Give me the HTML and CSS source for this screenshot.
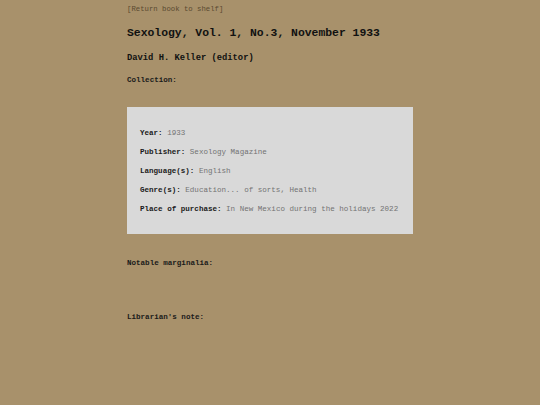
FILE: index.html
```html
<!DOCTYPE html>
<html>
<head>
<meta charset="utf-8">
<link rel="stylesheet" href="styles.css">
</head>
<body>
<div class="page">
  <a class="back" href="#">[Return book to shelf]</a>
  <h1 class="title">Sexology, Vol. 1, No.3, November 1933</h1>
  <h2 class="author">David H. Keller (editor)</h2>
  <div class="label collection">Collection:</div>
  <div class="card">
    <div class="row"><span class="label">Year:</span> <span class="val">1933</span></div>
    <div class="row"><span class="label">Publisher:</span> <span class="val">Sexology Magazine</span></div>
    <div class="row"><span class="label">Language(s):</span> <span class="val">English</span></div>
    <div class="row"><span class="label">Genre(s):</span> <span class="val">Education... of sorts, Health</span></div>
    <div class="row"><span class="label">Place of purchase:</span> <span class="val">In New Mexico during the holidays 2022</span></div>
  </div>
  <div class="label notable">Notable marginalia:</div>
  <div class="label librarian">Librarian's note:</div>
</div>
</body>
</html>
```
FILE: styles.css
```css
html, body {
  margin: 0;
  padding: 0;
  background: #a8916b;
}
body {
  font-family: "Liberation Mono", "Courier New", monospace;
  color: #1a1a1a;
}
.page {
  width: 286px;
  margin: 0 auto;
  padding-top: 4px;
  display: flex;
  flex-direction: column;
  align-items: flex-start;
}
.back {
  font-size: 7.3px;
  line-height: 10px;
  color: #5a4a30;
  text-decoration: none;
}
.title {
  margin: 12px 0 0;
  font-size: 11.4px;
  line-height: 14px;
  font-weight: bold;
  color: #111;
}
.author {
  margin: 12px 0 0;
  font-size: 8.8px;
  line-height: 12px;
  font-weight: bold;
  color: #111;
}
.label {
  font-size: 7.55px;
  line-height: 10px;
  font-weight: bold;
  color: #1a1a1a;
}
.collection {
  margin-top: 11px;
}
.card {
  align-self: stretch;
  margin-top: 22px;
  background: #d9d9d9;
  padding: 21px 13px 20px;
  display: flex;
  flex-direction: column;
  gap: 9px;
}
.row {
  font-size: 7.55px;
  line-height: 10px;
  white-space: nowrap;
}
.val {
  color: #737373;
}
.notable {
  margin-top: 24px;
}
.librarian {
  margin-top: 44px;
}
```
